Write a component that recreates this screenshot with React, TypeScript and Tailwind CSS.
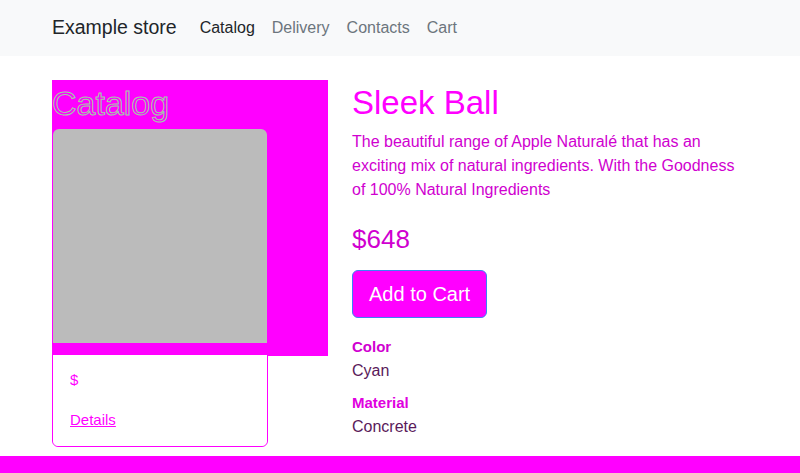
export default function App() {
  return (
    <div className="relative min-h-[473px] bg-white font-['Liberation_Sans',sans-serif] text-[#212529]">
      <nav className="h-14 bg-[#f8f9fa]">
        <div className="flex h-full items-center px-[52px]">
          <span className="mr-[23px] text-[19.5px] text-[#212529]">Example store</span>
          <div className="flex gap-[17px] text-[16px]">
            <span className="text-[#212529]">Catalog</span>
            <span className="text-[#6c757d]">Delivery</span>
            <span className="text-[#6c757d]">Contacts</span>
            <span className="text-[#6c757d]">Cart</span>
          </div>
        </div>
      </nav>

      <main className="mt-6 flex px-[52px]">
        <div className="h-[276px] w-[276px] shrink-0 bg-[#ff00ff]">
          <h1 className="mt-[1px] text-[34px] leading-[44px] text-transparent [-webkit-text-stroke:1px_#9fd0a8]">
            Catalog
          </h1>
          <div className="mt-[3px] w-[216px] rounded-[6px] border border-[#ff00ff]">
            <div className="h-[214px] rounded-t-[6px] bg-[#bbbbbb]" />
            <div className="h-3 bg-[#ff00ff]" />
            <div className="rounded-b-[6px] bg-white px-[17px] pb-[16px] pt-[15px] text-[15px] text-[#ff00ff]">
              <p className="leading-[20px]">$</p>
              <a className="mt-5 block leading-[20px] underline">Details</a>
            </div>
          </div>
        </div>

        <div className="ml-6 w-[396px]">
          <h2 className="mt-[2px] text-[33px] leading-[42px] text-[#ff00ff]">Sleek Ball</h2>
          <p className="mt-[6px] text-[16px] leading-[24px] text-[#d000d0]">
            The beautiful range of Apple Naturalé that has an exciting mix of natural ingredients. With the Goodness of 100% Natural Ingredients
          </p>
          <p className="mt-[21px] text-[26px] leading-[32px] text-[#d000d0]">$648</p>
          <button className="mt-[15px] h-12 rounded-[6px] border border-[#3b82f6] bg-[#ff00ff] px-4 text-[20px] text-white">
            Add to Cart
          </button>
          <div className="mt-[17px] text-[16px] leading-[24px]">
            <p className="text-[15px] font-bold text-[#d000d0]">Color</p>
            <p className="text-[#5a1a5a]">Cyan</p>
            <p className="mt-2 text-[15px] font-bold text-[#e000e0]">Material</p>
            <p className="text-[#5a1a5a]">Concrete</p>
          </div>
        </div>
      </main>

      <div className="absolute bottom-0 left-0 h-[17px] w-full bg-[#ff00ff]" />
    </div>
  );
}
